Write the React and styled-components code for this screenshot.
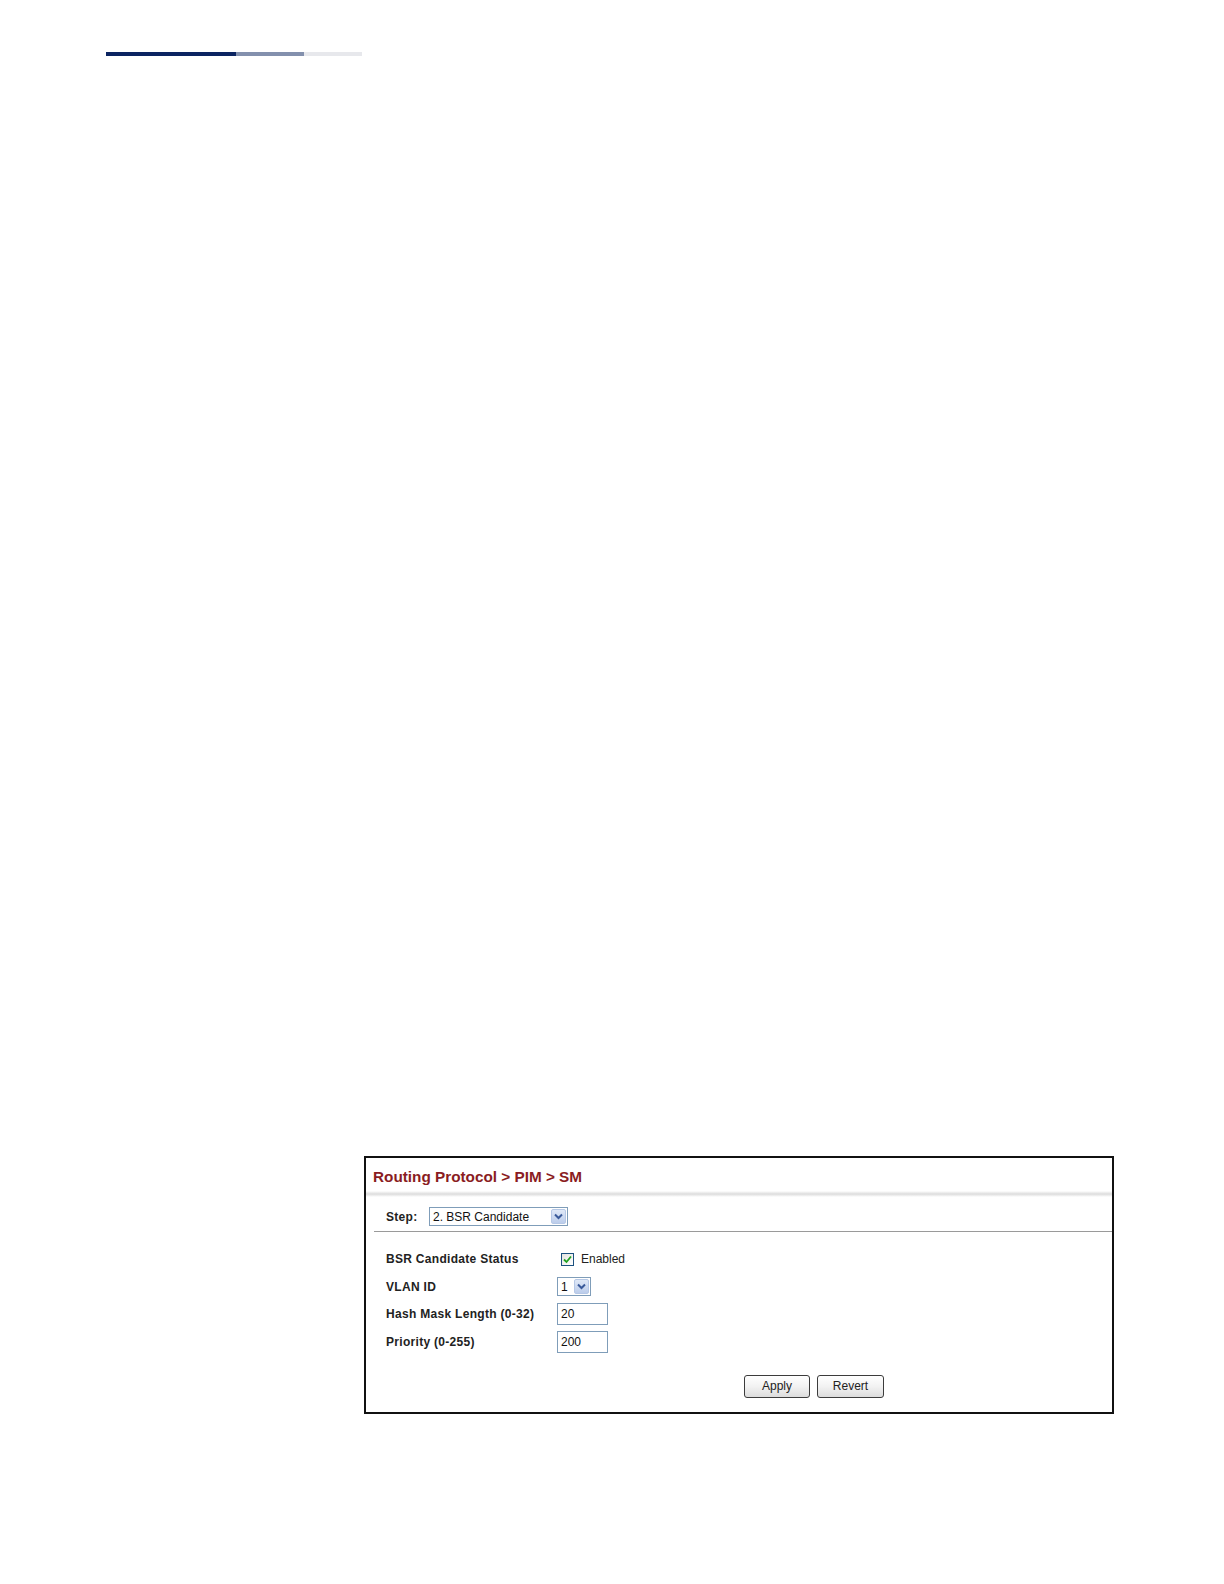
import React from "react";
import styled, { createGlobalStyle } from "styled-components";

const Global = createGlobalStyle`
  html, body { margin: 0; padding: 0; background: #ffffff; }
  body { font-family: "Liberation Sans", Arial, sans-serif; }
`;

const Page = styled.div`
  padding-top: 52px;
  padding-bottom: 100px;
`;

const HeaderBar = styled.div`
  display: flex;
  margin-left: 106px;
  height: 4px;
`;

const BarSeg = styled.div`
  width: ${(p) => p.$w}px;
  background: ${(p) => p.$c};
`;

const Frame = styled.div`
  margin-top: 1100px;
  margin-left: 364px;
  width: 750px;
  height: 258px;
  box-sizing: border-box;
  border: 2px solid #111;
  background: #fff;
  display: flex;
  flex-direction: column;
`;

const Title = styled.div`
  padding: 10px 0 5px 7px;
  font-size: 15.3px;
  line-height: 18px;
  font-weight: bold;
  color: #8a1c22;
`;

const Shadow = styled.div`
  height: 6px;
  background: linear-gradient(to bottom, rgba(220,220,220,0) 0%, #dcdcdc 50%, rgba(220,220,220,0) 100%);
`;

const StepRow = styled.div`
  display: flex;
  align-items: center;
  margin-left: 8px;
  padding: 10px 0 5px 12px;
  border-bottom: 1px solid #9a9a9a;
  gap: 10px;
`;

const Label = styled.div`
  font-size: 12px;
  letter-spacing: 0.3px;
  font-weight: bold;
  color: #222;
  width: ${(p) => (p.$w ? `${p.$w}px` : "auto")};
  flex-shrink: 0;
`;

const SelectBox = styled.div`
  display: flex;
  align-items: center;
  justify-content: space-between;
  width: ${(p) => p.$w}px;
  height: 19px;
  box-sizing: border-box;
  border: 1px solid #7f9db9;
  background: #fff;
  padding: 0 1px 0 3px;
  font-size: 12px;
  color: #111;
`;

const ArrowBtn = styled.div`
  width: 15px;
  height: 15px;
  box-sizing: border-box;
  border: 1px solid #b6c8e6;
  background: linear-gradient(to bottom, #dfe8f7, #bccdeb);
  border-radius: 2px;
  display: flex;
  align-items: center;
  justify-content: center;
`;

const Form = styled.div`
  display: flex;
  flex-direction: column;
  padding: 13.5px 0 0 20px;
`;

const Row = styled.div`
  display: flex;
  align-items: center;
  height: 27.6px;
`;

const CheckWrap = styled.div`
  display: flex;
  align-items: center;
  gap: 7px;
  margin-left: 4px;
  font-size: 12px;
  color: #222;
`;

const CheckBox = styled.div`
  width: 13px;
  height: 13px;
  box-sizing: border-box;
  border: 1px solid #1c5180;
  background: linear-gradient(135deg, #e4e4e0, #fff);
  display: flex;
  align-items: center;
  justify-content: center;
`;

const TextInput = styled.div`
  width: 51px;
  height: 22px;
  box-sizing: border-box;
  border: 1px solid #7f9db9;
  padding: 0 3px;
  display: flex;
  align-items: center;
  font-size: 12px;
  color: #111;
`;

const Buttons = styled.div`
  display: flex;
  gap: 7px;
  margin-top: 19px;
  padding-left: 378px;
`;

const Button = styled.div`
  width: ${(p) => p.$w}px;
  height: 23px;
  box-sizing: border-box;
  border: 1px solid #3c3c3c;
  border-radius: 3px;
  background: linear-gradient(to bottom, #ffffff 0%, #f2f2f2 50%, #dcdcdc 100%);
  display: flex;
  align-items: center;
  justify-content: center;
  font-size: 12px;
  color: #222;
`;

const Chevron = () => (
  <svg width="9" height="7" viewBox="0 0 9 7">
    <path d="M1 1.5 L4.5 5 L8 1.5" fill="none" stroke="#3a5a9a" strokeWidth="2" />
  </svg>
);

const Check = () => (
  <svg width="9" height="9" viewBox="0 0 9 9">
    <path d="M1 4.5 L3.5 7 L8 1.5" fill="none" stroke="#21a121" strokeWidth="1.8" />
  </svg>
);

export default function App() {
  return (
    <>
      <Global />
      <Page>
        <HeaderBar>
          <BarSeg $w={130} $c="#0b2461" />
          <BarSeg $w={68} $c="#8390ad" />
          <BarSeg $w={58} $c="#e7e8ec" />
        </HeaderBar>
        <Frame>
          <Title>Routing Protocol &gt; PIM &gt; SM</Title>
          <Shadow />
          <StepRow>
            <Label $w={33}>Step:</Label>
            <SelectBox $w={139}>
              <span>2. BSR Candidate</span>
              <ArrowBtn>
                <Chevron />
              </ArrowBtn>
            </SelectBox>
          </StepRow>
          <Form>
            <Row>
              <Label $w={171}>BSR Candidate Status</Label>
              <CheckWrap>
                <CheckBox>
                  <Check />
                </CheckBox>
                <span>Enabled</span>
              </CheckWrap>
            </Row>
            <Row>
              <Label $w={171}>VLAN ID</Label>
              <SelectBox $w={34}>
                <span>1</span>
                <ArrowBtn>
                  <Chevron />
                </ArrowBtn>
              </SelectBox>
            </Row>
            <Row>
              <Label $w={171}>Hash Mask Length (0-32)</Label>
              <TextInput>20</TextInput>
            </Row>
            <Row>
              <Label $w={171}>Priority (0-255)</Label>
              <TextInput>200</TextInput>
            </Row>
          </Form>
          <Buttons>
            <Button $w={66}>Apply</Button>
            <Button $w={67}>Revert</Button>
          </Buttons>
        </Frame>
      </Page>
    </>
  );
}
